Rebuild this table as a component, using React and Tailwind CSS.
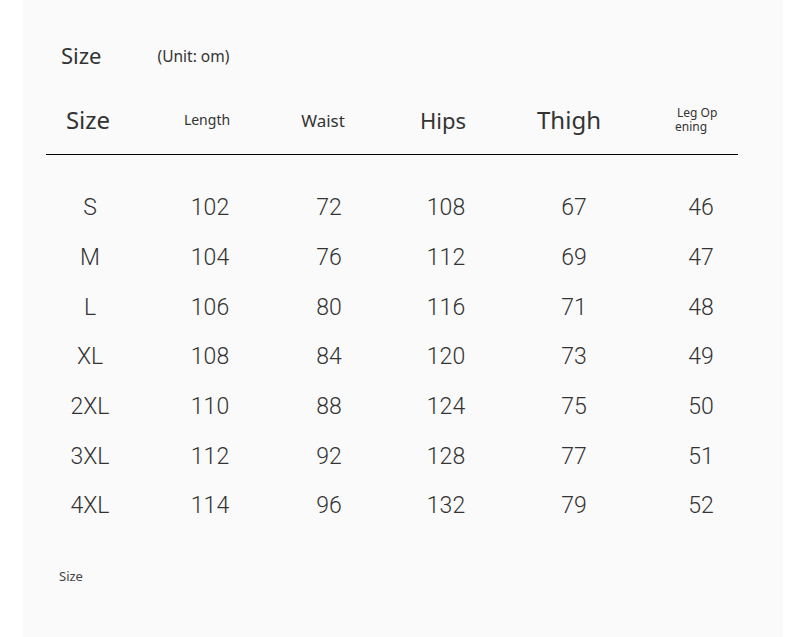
const rows = [
  ["S", "102", "72", "108", "67", "46"],
  ["M", "104", "76", "112", "69", "47"],
  ["L", "106", "80", "116", "71", "48"],
  ["XL", "108", "84", "120", "73", "49"],
  ["2XL", "110", "88", "124", "75", "50"],
  ["3XL", "112", "92", "128", "77", "51"],
  ["4XL", "114", "96", "132", "79", "52"],
]

export default function App() {
  return (
    <div className="min-h-screen bg-white">
      <div className="ml-[23px] h-[637px] w-[760px] bg-[#fafafa] pt-[40px] font-['Noto_Sans','Open_Sans',sans-serif] text-[#333]">
        <div className="flex items-center pl-[38px] h-[30px]">
          <span className="text-[22px] leading-[30px]">Size</span>
          <span className="ml-[56px] mt-[2px] text-[15.5px] leading-[20px]">(Unit: om)</span>
        </div>

        <div className="pl-[23px]">
          <div className="grid grid-cols-[84px_154px_78px_162px_90px_120px] mt-[16px] h-[68px] items-center text-center">
            <span className="text-[24px] leading-none">Size</span>
            <span className="text-[14px] leading-none">Length</span>
            <span className="text-[17px] leading-none">Waist</span>
            <span className="text-[22px] leading-none">Hips</span>
            <span className="text-[24px] leading-none">Thigh</span>
            <div className="flex flex-col gap-[1px] pl-[61px] pb-[2px] text-left text-[12px] leading-[13px]">
              <div className="pl-[2px]">Leg Op</div>
              <div>ening</div>
            </div>
          </div>
          <div className="h-px w-[692px] bg-black" />

          <div className="mt-[28px] font-['Roboto',sans-serif] font-light text-[23px] text-[#333]">
            {rows.map((r) => (
              <div
                key={r[0]}
                className="grid grid-cols-[88px_152px_86px_148px_108px_146px] h-[49.67px] items-center text-center"
              >
                {r.map((v, i) => (
                  <span key={i} className="leading-none">{v}</span>
                ))}
              </div>
            ))}
          </div>
        </div>

        <div className="mt-[36px] pl-[36px] text-[13px] leading-[18px] text-[#444]">Size</div>
      </div>
    </div>
  )
}
